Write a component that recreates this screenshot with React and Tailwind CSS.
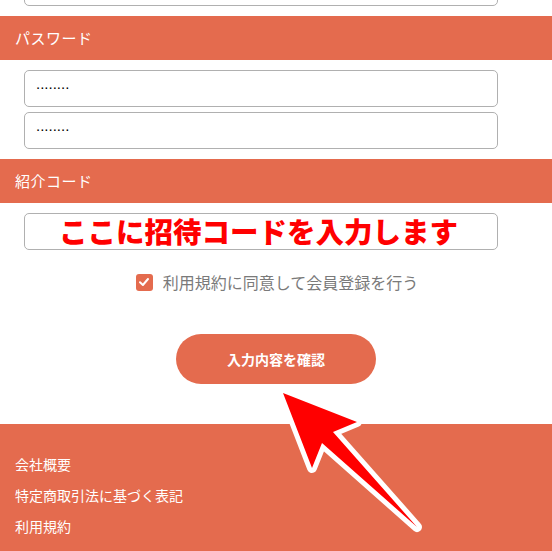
import React from "react";

const font = { fontFamily: '"Noto Sans CJK JP", "Noto Sans", sans-serif' };

function SectionHeader({ label }) {
  return (
    <div className="h-[44px] bg-[#e46b4e] flex items-center pl-[15px]">
      <span className="text-[15px] text-white tracking-[0.5px]">{label}</span>
    </div>
  );
}

function Field({ children, className = "" }) {
  return (
    <div
      className={`ml-[24px] w-[474px] h-[37px] border border-[#b0b0b0] rounded-[5px] bg-white flex items-center ${className}`}
    >
      {children}
    </div>
  );
}

function Dots() {
  return (
    <span
      className="pl-[11px] -mt-[10px] text-[15px] text-black leading-none"
      style={{ fontFamily: '"Liberation Sans", sans-serif' }}
    >
      ........
    </span>
  );
}

function Arrow() {
  // red pointer with a white outline laid over the button/footer
  return (
    <svg
      className="absolute left-0 top-0 pointer-events-none"
      width="552"
      height="551"
      viewBox="0 0 552 551"
    >
      <polygon
        points="283,393 357,422 333,432 417,527 322,443 312,468"
        fill="#ff0000"
        stroke="#ffffff"
        strokeWidth="10"
        strokeLinejoin="round"
        paintOrder="stroke"
      />
    </svg>
  );
}

export default function App() {
  return (
    <div className="relative w-[552px] h-[551px] overflow-hidden bg-white" style={font}>
      {/* tail of the field above */}
      <div className="ml-[24px] w-[474px] h-[37px] -mt-[31px] border border-[#b0b0b0] rounded-[5px]" />

      <div className="mt-[10px]">
        <SectionHeader label="パスワード" />
      </div>
      <div className="pt-[10px] flex flex-col gap-[5px]">
        <Field>
          <Dots />
        </Field>
        <Field>
          <Dots />
        </Field>
      </div>

      <div className="mt-[10px]">
        <SectionHeader label="紹介コード" />
      </div>
      <div className="pt-[10px]">
        <Field>
          <span className="pl-[34px] text-[28.5px] font-black text-[#ff0000] leading-none">
            ここに招待コードを入力します
          </span>
        </Field>
      </div>

      <div className="mt-[20px] flex items-center justify-center gap-[10px] pl-[2px]">
        <span className="w-[17px] h-[17px] rounded-[3px] bg-[#e46b4e] flex items-center justify-center">
          <svg width="12" height="12" viewBox="0 0 12 12">
            <path
              d="M2 6.2 L4.9 9 L10 3"
              fill="none"
              stroke="#ffffff"
              strokeWidth="2"
              strokeLinecap="round"
              strokeLinejoin="round"
            />
          </svg>
        </span>
        <span className="text-[16px] text-[#7a7a7a]">利用規約に同意して会員登録を行う</span>
      </div>

      <div className="mt-[40px] flex justify-start pl-[176px]">
        <button className="w-[200px] h-[50px] rounded-full bg-[#e46b4e] text-white text-[14px] font-bold">
          入力内容を確認
        </button>
      </div>

      <footer className="mt-[40px] h-[140px] bg-[#e46b4e] pt-[30px] pl-[15px] flex flex-col gap-[11px]">
        <a className="text-[14px] text-white leading-[20px]">会社概要</a>
        <a className="text-[14px] text-white leading-[20px]">特定商取引法に基づく表記</a>
        <a className="text-[14px] text-white leading-[20px]">利用規約</a>
      </footer>

      <Arrow />
    </div>
  );
}
